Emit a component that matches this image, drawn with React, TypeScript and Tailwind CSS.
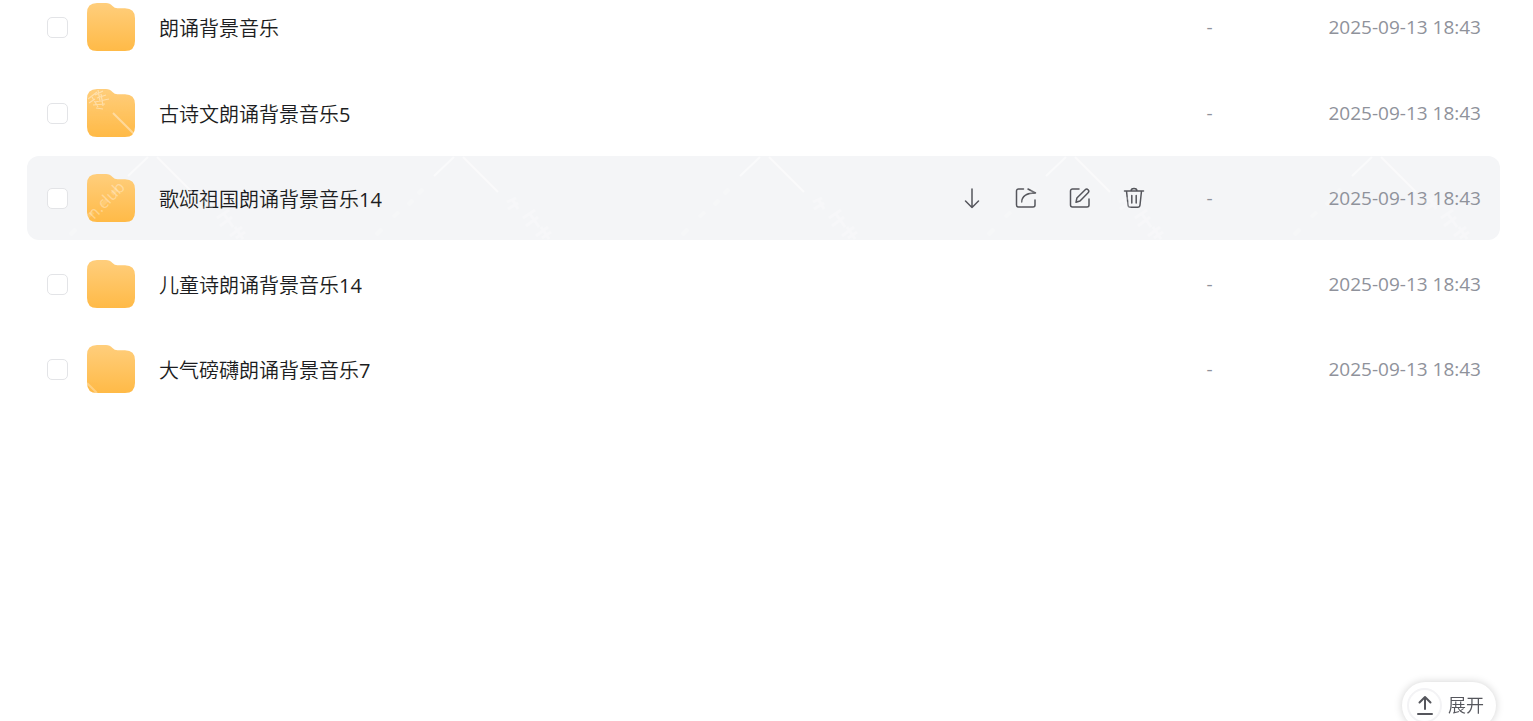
import { useId, useState } from 'react'

interface FileEntry {
  id: number
  name: string
  size: string
  modified: string
  mark?: 'seal' | 'domain' | 'corner'
}

const FILES: FileEntry[] = [
  { id: 1, name: '朗诵背景音乐', size: '-', modified: '2025-09-13 18:43' },
  { id: 2, name: '古诗文朗诵背景音乐5', size: '-', modified: '2025-09-13 18:43', mark: 'seal' },
  { id: 3, name: '歌颂祖国朗诵背景音乐14', size: '-', modified: '2025-09-13 18:43', mark: 'domain' },
  { id: 4, name: '儿童诗朗诵背景音乐14', size: '-', modified: '2025-09-13 18:43' },
  { id: 5, name: '大气磅礴朗诵背景音乐7', size: '-', modified: '2025-09-13 18:43', mark: 'corner' },
]

const DownloadIcon = () => (
  <path d="M12 3v18.500M5.500 15 12 21.500l6.500-6.500" />
)

const ShareIcon = () => (
  <>
    <path d="M9.500 3H4.500A2 2 0 0 0 2.500 5v14A2 2 0 0 0 4.500 21h14.500a2 2 0 0 0 2-2V14" />
    <path d="M14 3l7.500 4C13 7 8 9.500 7.700 16" />
  </>
)

const EditIcon = () => (
  <>
    <path d="M11 3H4.500A2 2 0 0 0 2.500 5v14A2 2 0 0 0 4.500 21h14.500a2 2 0 0 0 2-2V13" />
    <path d="M8 16.300l.9-4.300 8.300-8.200a2 2 0 0 1 2.900 2.900l-8.100 8.300z" />
  </>
)

const TrashIcon = () => (
  <path d="M2.500 5h19M9 5C9 1.500 15 1.500 15 5M4.500 5l1.500 14a2.400 2.400 0 0 0 2.400 2.200h7.200a2.400 2.400 0 0 0 2.400-2.200l1.500-14M9.800 9.500v7.500M14.200 9.500v7.500" />
)

const ACTIONS = [
  { label: '下载', icon: <DownloadIcon /> },
  { label: '分享', icon: <ShareIcon /> },
  { label: '重命名', icon: <EditIcon /> },
  { label: '删除', icon: <TrashIcon /> },
]

function FolderIcon({ mark }: { mark?: FileEntry['mark'] }) {
  const id = useId()
  return (
    <svg viewBox="0 0 48 48" className="size-12 shrink-0 overflow-visible" aria-hidden="true">
      <defs>
        <linearGradient id={`${id}-fill`} x1="0" y1="0" x2="0" y2="1">
          <stop offset="0" stopColor="#ffce7c" />
          <stop offset="1" stopColor="#ffba47" />
        </linearGradient>
        <clipPath id={`${id}-clip`}>
          <path d="M0 10Q0 0 10 0h9q4 0 6.500 3 2 2.200 5 2.200H38q10 0 10 10V38q0 10-10 10H10Q0 48 0 38Z" />
        </clipPath>
      </defs>
      <g clipPath={`url(#${id}-clip)`}>
        <path fill={`url(#${id}-fill)`} d="M0 0h48v48H0z" />
        {mark === 'seal' && (
          <g stroke="#fff" fill="none" opacity=".4">
            <path d="M1 10l9-7M2 14l6-4M8 6l8-4M10 9l9-3M8 13l14-3M6 16l12-1M9 19l7 1M11 1l2 11M5 8l6 10M14 5l2 12" strokeWidth="1.200" />
            <path d="M26 24l22 22" strokeWidth="2" />
          </g>
        )}
        {mark === 'corner' && <path d="M0 38l10 10" stroke="#fff" strokeWidth="2" opacity=".3" />}
      </g>
      {mark === 'domain' && (
        <text x="7" y="46" transform="rotate(-45 7 46)" fill="#fff" fillOpacity=".35" fontSize="16" fontFamily="Open Sans, sans-serif">
          n.club
        </text>
      )}
    </svg>
  )
}

function Watermark() {
  const id = useId()
  return (
    <svg className="pointer-events-none absolute inset-0 size-full" aria-hidden="true">
      <defs>
        <pattern id={id} width="306" height="84" patternUnits="userSpaceOnUse">
          <g stroke="#fff" fill="none" opacity=".5">
            <path d="M121 1l-20 19M130 1l35 35" strokeWidth="2" />
            <path d="M174 46l9-4M175 53l10-6M179 43l6 10M190 62l12-8M193 70l12-9M197 58l9 13M203 80l12-9M209 82l9-6M208 71l8 12" strokeWidth="3" opacity=".45" />
            <path d="M90 33l-5 5M80 44l-5 5M66 56l-6 5M49 73l-6 6" strokeWidth="4" opacity=".3" />
          </g>
        </pattern>
      </defs>
      <rect width="100%" height="100%" fill={`url(#${id})`} />
    </svg>
  )
}

interface RowProps {
  file: FileEntry
  active: boolean
  checked: boolean
  onHover: () => void
  onToggle: () => void
}

function FileRow({ file, active, checked, onHover, onToggle }: RowProps) {
  return (
    <tr
      onMouseEnter={onHover}
      className={`relative mb-px flex h-[84px] items-center overflow-hidden rounded-xl pr-[19px] pl-5 odd:mb-0.5 ${active ? 'bg-[#f4f5f7]' : ''}`}
    >
      <td className="flex w-10 shrink-0 items-center">
        <input
          type="checkbox"
          aria-label={`选择 ${file.name}`}
          checked={checked}
          onChange={onToggle}
          className="size-[21px] appearance-none rounded-[5px] border border-[#e3e4e7] bg-white checked:border-blue-500 checked:bg-blue-500"
        />
      </td>
      <td className="flex min-w-0 flex-1 items-center gap-6">
        <FolderIcon mark={file.mark} />
        <a href="#" className="truncate pt-[3px] text-[20px] leading-7 text-[#1c1d21]">{file.name}</a>
      </td>
      <td className="mr-[60px] flex shrink-0 gap-[30px]">
        {active && ACTIONS.map(a => (
          <button key={a.label} type="button" aria-label={a.label} className="text-[#55565c]">
            <svg viewBox="0 0 24 24" className="size-6" fill="none" stroke="currentColor" strokeWidth="1.500" strokeLinecap="round" strokeLinejoin="round">
              {a.icon}
            </svg>
          </button>
        ))}
      </td>
      <td className="w-[122px] shrink-0 text-[19px] leading-7 text-[#8f929b]">{file.size}</td>
      <td className="shrink-0 text-[19px] leading-7 whitespace-nowrap text-[#8f929b]">{file.modified}</td>
      {active && <td className="contents"><Watermark /></td>}
    </tr>
  )
}

export default function App() {
  const [activeId, setActiveId] = useState(3)
  const [selected, setSelected] = useState<number[]>([])

  function toggle(id: number) {
    setSelected(s => (s.includes(id) ? s.filter(x => x !== id) : [...s, id]))
  }

  return (
    <div className="min-h-screen overflow-hidden bg-white font-['Open_Sans','Noto_Sans_CJK_SC_DemiLight','Noto_Sans_CJK_SC',sans-serif]">
      <main className="-mt-[15px] pr-[33px] pl-[27px]">
        <table className="block w-full">
          <tbody className="block">
            {FILES.map(f => (
              <FileRow
                key={f.id}
                file={f}
                active={f.id === activeId}
                checked={selected.includes(f.id)}
                onHover={() => setActiveId(f.id)}
                onToggle={() => toggle(f.id)}
              />
            ))}
          </tbody>
        </table>
      </main>

      <button
        type="button"
        className="fixed right-[37px] -bottom-2 flex h-[47px] items-center gap-1.5 rounded-full bg-white pr-3 pl-[5px] text-[18px] font-light text-[#55565c] shadow-[0_0_8px_rgba(0,0,0,0.18)]"
      >
        <span className="flex size-[35px] items-center justify-center rounded-full border-2 border-[#f3f3f5]">
          <svg viewBox="0 0 20 22" className="h-[22px] w-5" fill="none" stroke="currentColor" strokeWidth="2" strokeLinecap="round" strokeLinejoin="round" aria-hidden="true">
            <path d="M10 14V2M4.500 7.500 10 2l5.500 5.500M3 19h14" />
          </svg>
        </span>
        展开
      </button>
    </div>
  )
}
